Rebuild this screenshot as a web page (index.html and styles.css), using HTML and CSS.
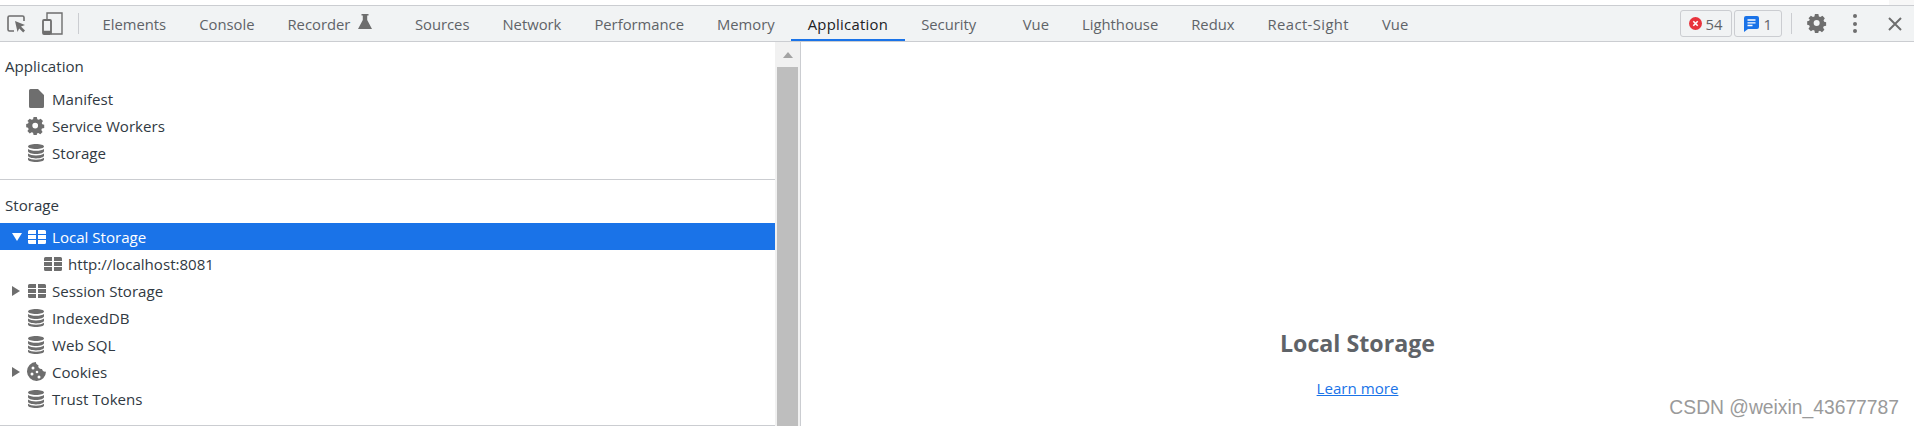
FILE: index.html
```html
<!DOCTYPE html>
<html lang="en">
<head>
    <meta charset="UTF-8">
    <meta name="viewport" content="width=device-width, initial-scale=1.0">
    <title>DevTools - Application</title>
    <link rel="stylesheet" href="styles.css">
</head>
<body>
    <svg class="icon-defs" width="0" height="0">
        <symbol id="i-table" viewBox="0 0 18 14">
            <path d="M1.500 0H8v4H0V1.500A1.500 1.500 0 0 1 1.500 0zM10 0h6.500A1.500 1.500 0 0 1 18 1.500V4h-8zM0 5h8v4H0zM10 5h8v4h-8zM0 10h8v4H1.500A1.500 1.500 0 0 1 0 12.500zM10 10h8v2.500a1.500 1.500 0 0 1-1.500 1.500H10z"/>
        </symbol>
        <symbol id="i-db" viewBox="0 0 18 18">
            <path d="M9 0c4.400 0 8 1.100 8 2.500S13.400 5 9 5 1 3.900 1 2.500 4.600 0 9 0z"/>
            <path d="M1 5c1.500 1.200 4.500 1.800 8 1.800S15.500 6.200 17 5v2.200C17 8.700 13.400 10 9 10S1 8.700 1 7.200z"/>
            <path d="M1 9.500c1.500 1.200 4.500 1.900 8 1.900s6.500-.7 8-1.900v2.300c0 1.400-3.600 2.600-8 2.600s-8-1.200-8-2.600z"/>
            <path d="M1 13.800c1.500 1.200 4.500 1.900 8 1.900s6.500-.7 8-1.900v1.700C17 16.900 13.400 18 9 18s-8-1.100-8-2.500z"/>
        </symbol>
        <symbol id="i-gear" viewBox="0 0 20 20">
            <path fill-rule="evenodd" d="M8 0h4l.6 2.800 1.700.7L16.700 2l2.800 2.800-1.500 2.400.7 1.700 2.300.6v4l-2.800.6-.7 1.700 1.500 2.400-2.800 2.800-2.400-1.500-1.700.7L12 22H8l-.6-2.800-1.700-.7L3.300 20 .5 17.200 2 14.800l-.7-1.700L-1 12.500v-4l2.300-.6.700-1.700L.5 4.800 3.300 2l2.400 1.500 1.700-.7zM10 7a3.500 3.500 0 1 0 0 7 3.500 3.500 0 0 0 0-7z" transform="translate(1 1) scale(.82)"/>
        </symbol>
    </svg>

    <div class="top-strip"><span class="top-corner"></span></div>

    <div class="toolbar">
        <div class="tool-icons">
            <svg class="tool-icon" width="20" height="20" viewBox="0 0 20 20" fill="none" stroke="#6e6e6e" stroke-width="1.600">
                <path d="M7 17H2.500A1.500 1.500 0 0 1 1 15.500v-12A1.500 1.500 0 0 1 2.500 2h13A1.500 1.500 0 0 1 17 3.500V7"/>
                <path d="M8 7l10 4-4 1.600 4 4-1.800 1.800-4-4L10.500 18z" fill="#6e6e6e" stroke="none"/>
            </svg>
            <svg class="tool-icon" width="21" height="23" viewBox="0 0 21 23" fill="none" stroke="#6e6e6e" stroke-width="1.400">
                <path d="M5 8V1h15v21H9"/>
                <rect x="1" y="8" width="8" height="14" rx="1" stroke-width="1.800"/>
                <path d="M1 20h8" stroke-width="2.500"/>
            </svg>
        </div>
        <span class="divider"></span>
        <nav class="tabs">
            <a class="tab">Elements</a>
            <a class="tab">Console</a>
            <a class="tab tab-flask">Recorder
                <svg class="flask" width="14" height="15" viewBox="0 0 14 15" fill="#6e6e6e"><path d="M3.500 0h7v1.500H9.200V6L14 15H0L4.800 6V1.500H3.500z"/></svg>
            </a>
            <a class="tab">Sources</a>
            <a class="tab">Network</a>
            <a class="tab">Performance</a>
            <a class="tab">Memory</a>
            <a class="tab active">Application</a>
            <a class="tab tab-spaced">Security</a>
            <a class="tab">Vue</a>
            <a class="tab">Lighthouse</a>
            <a class="tab">Redux</a>
            <a class="tab tab-wide">React-Sight</a>
            <a class="tab">Vue</a>
        </nav>
        <div class="status">
            <span class="badge badge-error">
                <svg width="13" height="13" viewBox="0 0 13 13"><circle cx="6.500" cy="6.500" r="6.500" fill="#e8333c"/><path d="M4.300 4.300l4.400 4.400M8.700 4.300l-4.400 4.400" stroke="#fff" stroke-width="1.600"/></svg>
                54
            </span>
            <span class="badge">
                <svg width="15" height="16" viewBox="0 0 15 16"><path d="M2 0h11a2 2 0 0 1 2 2v9a2 2 0 0 1-2 2H4l-4 3V2a2 2 0 0 1 2-2z" fill="#1a73e8"/><path d="M3.500 4h8M3.500 6.800h8M3.500 9.500h5" stroke="#fff" stroke-width="1.300"/></svg>
                1
            </span>
            <span class="divider divider-status"></span>
            <svg class="gear" width="21" height="21" fill="#6e6e6e"><use href="#i-gear"/></svg>
            <span class="dots"><i></i><i></i><i></i></span>
            <svg class="close" width="14" height="14" viewBox="0 0 14 14" stroke="#6e6e6e" stroke-width="2"><path d="M1 1l12 12M13 1L1 13"/></svg>
        </div>
    </div>

    <div class="main">
        <aside class="sidebar">
            <section class="section">
                <h2 class="section-title section-first">Application</h2>
                <div class="row">
                    <span class="arrow"></span>
                    <span class="row-icon"><svg width="15" height="19" viewBox="0 0 15 19" fill="#6e6e6e"><path d="M1.500 0H9l6 6v11.500a1.500 1.500 0 0 1-1.500 1.500h-12A1.500 1.500 0 0 1 0 17.500v-16A1.500 1.500 0 0 1 1.500 0z"/></svg></span>
                    Manifest
                </div>
                <div class="row">
                    <span class="arrow"></span>
                    <span class="row-icon"><svg width="20" height="20" fill="#6e6e6e"><use href="#i-gear"/></svg></span>
                    Service Workers
                </div>
                <div class="row">
                    <span class="arrow"></span>
                    <span class="row-icon"><svg width="18" height="18" fill="#6e6e6e"><use href="#i-db"/></svg></span>
                    Storage
                </div>
            </section>
            <section class="section">
                <h2 class="section-title">Storage</h2>
                <div class="row selected">
                    <span class="arrow arrow-down"></span>
                    <span class="row-icon"><svg class="icon-table" width="18" height="14" fill="#fff"><use href="#i-table"/></svg></span>
                    Local Storage
                </div>
                <div class="row nested">
                    <span class="arrow"></span>
                    <span class="row-icon"><svg class="icon-table" width="18" height="14" fill="#6e6e6e"><use href="#i-table"/></svg></span>
                    http://localhost:8081
                </div>
                <div class="row">
                    <span class="arrow arrow-right"></span>
                    <span class="row-icon"><svg class="icon-table" width="18" height="14" fill="#6e6e6e"><use href="#i-table"/></svg></span>
                    Session Storage
                </div>
                <div class="row">
                    <span class="arrow"></span>
                    <span class="row-icon"><svg width="18" height="18" fill="#6e6e6e"><use href="#i-db"/></svg></span>
                    IndexedDB
                </div>
                <div class="row">
                    <span class="arrow"></span>
                    <span class="row-icon"><svg width="18" height="18" fill="#6e6e6e"><use href="#i-db"/></svg></span>
                    Web SQL
                </div>
                <div class="row">
                    <span class="arrow arrow-right"></span>
                    <span class="row-icon">
                        <svg width="19" height="19" viewBox="0 0 19 19">
                            <path d="M9 0a2.500 2.500 0 0 0 2.500 3A3 3 0 0 0 15 7a3 3 0 0 0 4 2.500A9.500 9.500 0 1 1 9 0z" fill="#6e6e6e"/>
                            <circle cx="6" cy="6" r="1.500" fill="#fff"/>
                            <circle cx="5" cy="12" r="1.500" fill="#fff"/>
                            <circle cx="10" cy="10" r="1.300" fill="#fff"/>
                            <circle cx="12" cy="15" r="1.500" fill="#fff"/>
                        </svg>
                    </span>
                    Cookies
                </div>
                <div class="row">
                    <span class="arrow"></span>
                    <span class="row-icon"><svg width="18" height="18" fill="#6e6e6e"><use href="#i-db"/></svg></span>
                    Trust Tokens
                </div>
            </section>
        </aside>
        <div class="scrollbar">
            <span class="scroll-up"></span>
            <span class="scroll-thumb"></span>
        </div>
        <div class="content">
            <h1 class="content-title">Local Storage</h1>
            <a class="learn-more" href="#">Learn more</a>
        </div>
    </div>

    <div class="watermark">CSDN @weixin_43677787</div>
</body>
</html>
```

FILE: styles.css
```css
* {
    margin: 0;
    padding: 0;
    box-sizing: border-box;
}

body {
    font-family: 'Open Sans', 'Noto Sans', sans-serif;
    background: white;
    height: 426px;
    overflow: hidden;
    display: flex;
    flex-direction: column;
    position: relative;
}

.icon-defs {
    position: absolute;
}

.top-strip {
    height: 6px;
    border-bottom: 1px solid #cbcdd1;
    display: flex;
    justify-content: flex-end;
}

.top-corner {
    width: 25px;
    background: #f7f7f7;
}

.toolbar {
    height: 36px;
    background: #f1f3f4;
    border-bottom: 1px solid #cbcdd1;
    display: flex;
    align-items: center;
}

.tool-icons {
    display: flex;
    align-items: center;
    gap: 15px;
    padding-left: 7px;
    width: 78px;
}

.divider {
    width: 1px;
    height: 21px;
    background: #cbcdd1;
    flex-shrink: 0;
}

.tabs {
    display: flex;
    height: 35px;
    margin-left: 7px;
}

.tab {
    display: flex;
    align-items: center;
    padding: 0 16.5px;
    font-size: 14.8px;
    color: #5f6368;
}

.tab.active {
    color: #202124;
    border-bottom: 2px solid #1a73e8;
    padding-top: 2px;
    letter-spacing: 0.3px;
}

.tab-flask {
    padding-right: 12px;
}

.flask {
    margin: -4px 14px 0 8px;
}

.tab-spaced {
    padding-right: 30px;
}

.tab-wide {
    letter-spacing: 0.4px;
}

.status {
    margin-left: auto;
    display: flex;
    align-items: center;
    padding-right: 12px;
}

.badge {
    height: 27px;
    border: 1px solid #cbcdd1;
    border-radius: 3px;
    display: flex;
    align-items: center;
    justify-content: center;
    gap: 5px;
    padding: 0 9px;
    margin-right: 3px;
    font-size: 14.8px;
    color: #5f6368;
}

.badge-error {
    gap: 4px;
    padding: 0 8px;
    margin-right: 2px;
}

.divider-status {
    margin: 0 15px 0 6px;
}

.dots {
    display: flex;
    flex-direction: column;
    gap: 3.5px;
    margin: 0 31px 0 25px;
}

.dots i {
    width: 4px;
    height: 4px;
    border-radius: 50%;
    background: #6e6e6e;
}

.main {
    flex: 1;
    display: flex;
    min-height: 0;
}

.sidebar {
    width: 775px;
    flex-shrink: 0;
    font-size: 15.1px;
    color: #303942;
}

.section {
    padding-bottom: 13px;
    border-bottom: 1px solid #cbcdd1;
}

.section-title {
    height: 43px;
    padding: 14px 0 0 5px;
    font-size: 15.1px;
    font-weight: 400;
    line-height: 22px;
}

.section-title.section-first {
    padding-top: 13px;
}

.row {
    height: 27px;
    display: flex;
    align-items: center;
    padding-left: 12px;
    white-space: nowrap;
}

.row.nested {
    padding-left: 28px;
}

.row.selected {
    background: #1a73e8;
    color: white;
}

.arrow {
    width: 14px;
    height: 10px;
    flex-shrink: 0;
}

.arrow-right {
    border-left: 8px solid #6e6e6e;
    border-top: 5px solid transparent;
    border-bottom: 5px solid transparent;
    width: 0;
    margin-right: 6px;
}

.arrow-down {
    border-top: 8px solid white;
    border-left: 5px solid transparent;
    border-right: 5px solid transparent;
    width: 0;
    height: 0;
    margin-right: 4px;
}

.row-icon {
    width: 20px;
    margin-right: 6px;
    display: flex;
    justify-content: center;
    align-items: center;
    flex-shrink: 0;
}

.icon-table {
    margin-left: 1px;
}

.scrollbar {
    width: 26px;
    flex-shrink: 0;
    background: #f1f1f1;
    border-right: 1px solid #cbcdd1;
    display: flex;
    flex-direction: column;
    align-items: center;
}

.scroll-up {
    margin-top: 10px;
    border-bottom: 6px solid #a3a3a3;
    border-left: 5.5px solid transparent;
    border-right: 5.5px solid transparent;
}

.scroll-thumb {
    width: 21px;
    flex: 1;
    margin-top: 9px;
    background: #bebebe;
}

.content {
    flex: 1;
    display: flex;
    flex-direction: column;
    align-items: center;
}

.content-title {
    margin-top: 284px;
    font-size: 23.2px;
    font-weight: 700;
    line-height: 34px;
    color: #5f6368;
}

.learn-more {
    margin-top: 17px;
    font-size: 15.1px;
    line-height: 22px;
    color: #1a73e8;
}

.watermark {
    position: absolute;
    right: 15px;
    top: 398px;
    font-family: 'Liberation Sans', sans-serif;
    font-size: 19.3px;
    line-height: 20px;
    color: #9a9a9a;
}
```
